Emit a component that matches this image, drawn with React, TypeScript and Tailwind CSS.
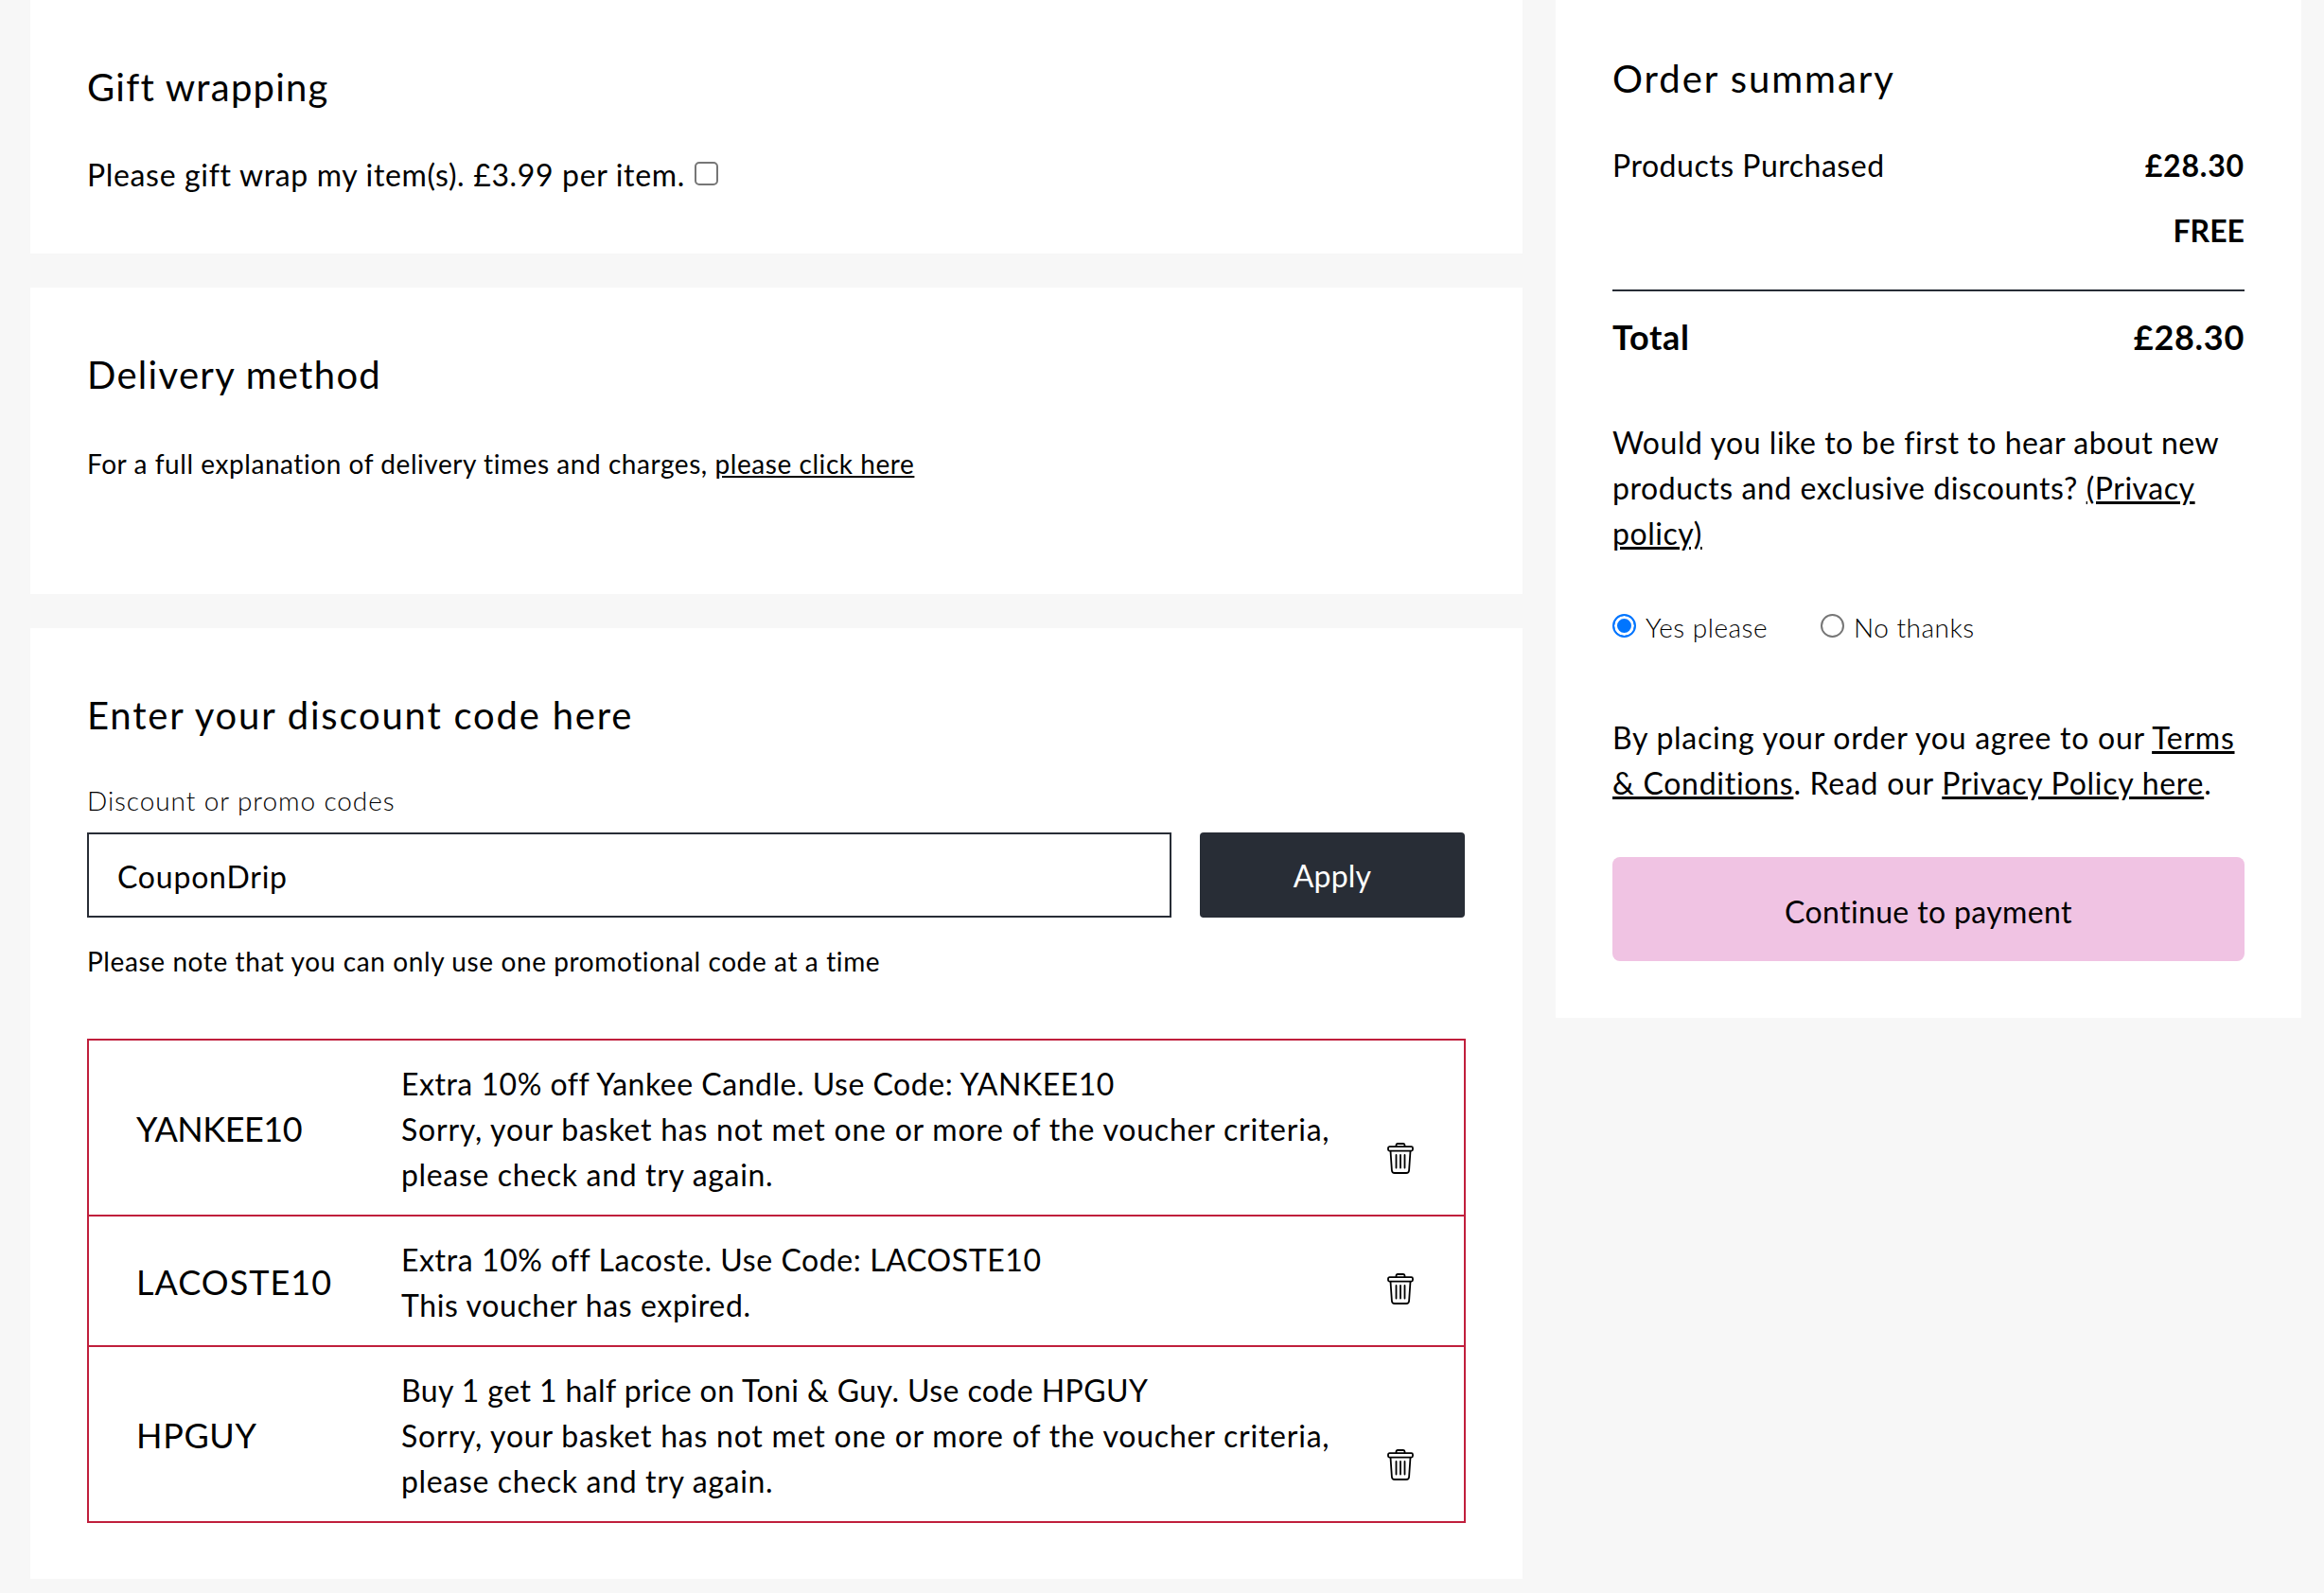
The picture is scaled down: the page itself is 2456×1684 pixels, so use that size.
import React from "react";

function Trash() {
  return (
    <svg width="28" height="33" viewBox="0 0 28 33" fill="none" stroke="#000" strokeWidth="1.8" strokeLinecap="round" strokeLinejoin="round">
      <path d="M9.5 4V2.6C9.5 1.7 10.2 1 11 1h6c.8 0 1.500.7 1.500 1.600V4" />
      <path d="M2.500 4.200h23c.8 0 1.500.7 1.500 1.500v1.400c0 .8-.7 1.500-1.500 1.500h-23C1.700 8.600 1 7.900 1 7.100V5.700c0-.8.700-1.500 1.500-1.500z" />
      <path d="M3.500 8.800l1.400 20.400c.1 1.600 1.400 2.800 3 2.800h12.200c1.600 0 2.900-1.200 3-2.800l1.400-20.400" />
      <path d="M9.500 13v13.500M14 13v13.500M18.500 13v13.500" />
    </svg>
  );
}

const sorry = { t: "Sorry, your basket has not met one or more of the voucher criteria,", c: "tracking-[0.78px]" };
const again = { t: "please check and try again.", c: "tracking-[0.66px]" };

const rows = [
  { code: "YANKEE10", cc: "tracking-[-0.48px]", lines: [{ t: "Extra 10% off Yankee Candle. Use Code: YANKEE10", c: "tracking-[0.52px]" }, sorry, again] },
  { code: "LACOSTE10", cc: "tracking-[1.02px]", lines: [{ t: "Extra 10% off Lacoste. Use Code: LACOSTE10", c: "tracking-[0.6px]" }, { t: "This voucher has expired.", c: "tracking-[0.62px]" }] },
  { code: "HPGUY", cc: "tracking-[0.65px]", lines: [{ t: "Buy 1 get 1 half price on Toni & Guy. Use code HPGUY", c: "tracking-[0.42px]" }, sorry, again] },
];

export default function App() {
  return (
    <div className="min-h-[1684px] bg-[#f7f7f7] text-black flex items-start font-['Lato',sans-serif]">
      <div className="ml-8 w-[1577px] flex flex-col gap-[36px]">
        <section className="bg-white h-[268px] px-[60px] pt-[66px]">
          <h2 className="text-[40px] leading-[52px] tracking-[1.24px]">Gift wrapping</h2>
          <div className="mt-[43px] flex items-center text-[32px] leading-[48px] tracking-[0.66px]">
            <span>Please gift wrap my item(s). £3.99 per item.</span>
            <input type="checkbox" className="appearance-none ml-[10px] w-[25px] h-[25px] -mt-[3px] border-2 border-[#767676] rounded-[5px] bg-white" />
          </div>
        </section>
        <section className="bg-white h-[324px] px-[60px] pt-[66px]">
          <h2 className="text-[40px] leading-[52px] tracking-[1.3px]">Delivery method</h2>
          <p className="mt-[46px] text-[28px] leading-[44px] tracking-[0.56px]">
            For a full explanation of delivery times and charges, <a className="underline">please click here</a>
          </p>
        </section>
        <section className="bg-white h-[1005px] px-[60px] pt-[66px]">
          <h2 className="text-[40px] leading-[52px] tracking-[1.8px]">Enter your discount code here</h2>
          <label className="block mt-[42px] text-[28px] leading-[44px] font-light tracking-[0.92px]">Discount or promo codes</label>
          <div className="mt-[12px] flex gap-[30px]">
            <div className="w-[1146px] h-[90px] border-2 border-[#282d36] px-[30px] pt-[4px] flex items-center text-[32px] tracking-[0.79px]">CouponDrip</div>
            <button className="w-[280px] h-[90px] pt-[1px] bg-[#282d36] rounded text-white text-[32px] tracking-[0.2px]">Apply</button>
          </div>
          <p className="mt-[24px] text-[28px] leading-[44px] tracking-[0.61px]">Please note that you can only use one promotional code at a time</p>
          <div className="mt-[60px] border-2 border-[#c01f3c]">
            {rows.map((r, i) => (
              <div key={r.code} className={`flex px-[50px] pt-[22px] pb-[18px] ${i > 0 ? "border-t-2 border-[#c01f3c]" : ""}`}>
                <div className={`w-[280px] shrink-0 self-center -mt-[3px] text-[36px] leading-[48px] ${r.cc}`}>{r.code}</div>
                <div className="flex-1 text-[32px] leading-[48px]">
                  {r.lines.map((l) => <div key={l.t} className={l.c}>{l.t}</div>)}
                </div>
                <div className="self-end mb-[25px] mr-[3px] shrink-0"><Trash /></div>
              </div>
            ))}
          </div>
        </section>
      </div>
      <aside className="ml-[35px] w-[788px] h-[1076px] bg-white px-[60px] pt-[57px]">
        <h2 className="text-[40px] leading-[52px] tracking-[1.96px]">Order summary</h2>
        <div className="mt-[42px] flex justify-between text-[32px] leading-[48px]">
          <span className="tracking-[0.52px]">Products Purchased</span><span className="font-bold tracking-[0.82px]">£28.30</span>
        </div>
        <div className="mt-[21px] text-right text-[32px] leading-[48px] font-bold">FREE</div>
        <div className="mt-[38px] border-t-2 border-[#282d36]" />
        <div className="mt-[24px] flex justify-between text-[36px] leading-[48px] font-bold tracking-[0.7px]">
          <span>Total</span><span>£28.30</span>
        </div>
        <p className="mt-[64px] text-[32px] leading-[48px] tracking-[0.54px]">
          Would you like to be first to hear about new products and exclusive discounts? <a className="underline">(Privacy policy)</a>
        </p>
        <div className="mt-[53px] flex items-center text-[28px] leading-[44px] font-light tracking-[0.5px]">
          <label className="flex items-center">
            <input type="radio" name="m" defaultChecked className="appearance-none w-[25px] h-[25px] mr-[10px] -mt-[4px] rounded-full border-2 border-[#767676] bg-white checked:border-[#0075ff] checked:bg-[#0075ff] checked:shadow-[inset_0_0_0_3px_white]" />Yes please
          </label>
          <label className="flex items-center ml-[56px]">
            <input type="radio" name="m" className="appearance-none w-[25px] h-[25px] mr-[10px] -mt-[4px] rounded-full border-2 border-[#767676] bg-white checked:border-[#0075ff] checked:bg-[#0075ff] checked:shadow-[inset_0_0_0_3px_white]" />No thanks
          </label>
        </div>
        <p className="mt-[71px] text-[32px] leading-[48px] tracking-[0.73px]">
          By placing your order you agree to our <a className="underline">Terms &amp; Conditions</a>. Read our <a className="underline">Privacy Policy here</a>.
        </p>
        <button className="mt-[54px] w-full h-[110px] pt-[6px] rounded-lg bg-[#f0c3e3] text-[32px] tracking-[0.37px]">Continue to payment</button>
      </aside>
    </div>
  );
}
